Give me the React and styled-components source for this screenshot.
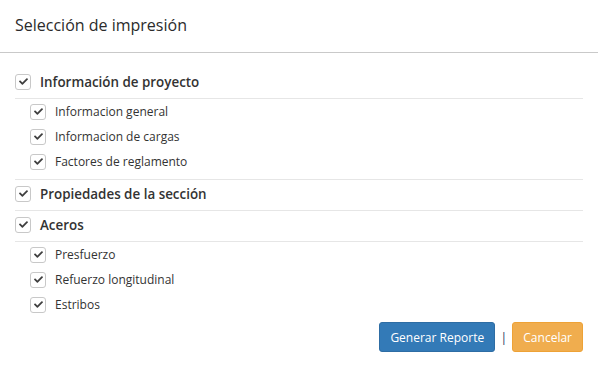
import React from "react";
import styled, { createGlobalStyle } from "styled-components";

const Global = createGlobalStyle`
  html, body { margin: 0; padding: 0; background: #fff; }
  body { font-family: "Open Sans", "Liberation Sans", sans-serif; color: #333; }
  * { box-sizing: border-box; }
`;

const Modal = styled.div`
  width: 598px;
  height: 372px;
  background: #fff;
  display: flex;
  flex-direction: column;
`;

const Header = styled.div`
  height: 53px;
  display: flex;
  align-items: center;
  padding: 0 15px 2px;
  border-bottom: 1px solid #c9c9c9;
`;

const Title = styled.h4`
  margin: 0;
  font-size: 16px;
  font-weight: 400;
  color: #2b2b2b;
`;

const Body = styled.div`
  padding: 15px 15px 0;
`;

const Section = styled.div`
  border-bottom: 1px solid #e6e6e6;
  &:last-child { border-bottom: none; }
`;

const TopRow = styled.label`
  display: flex;
  align-items: center;
  gap: 9px;
  height: ${(p) => (p.$withChildren ? "31px" : "30px")};
  padding-bottom: 3px;
  border-bottom: ${(p) => (p.$withChildren ? "1px solid #e6e6e6" : "none")};
  font-size: 13.4px;
  font-weight: 600;
  color: #333;
`;

const SubList = styled.div`
  padding: 0 0 5px 15px;
`;

const SubRow = styled.label`
  display: flex;
  align-items: center;
  gap: 9px;
  height: 25px;
  font-size: 12px;
  font-weight: 400;
  color: #333;
`;

const Box = styled.span`
  width: 16px;
  height: 16px;
  flex: none;
  border: 1px solid #c8c8c8;
  border-radius: 3px;
  background: #fff;
  display: flex;
  align-items: center;
  justify-content: center;
  svg { width: 9px; height: 9px; fill: #3f3f3f; }
`;

const Footer = styled.div`
  display: flex;
  justify-content: flex-end;
  align-items: center;
  gap: 5px;
  padding: 0 15px;
`;

const Button = styled.button`
  height: 30px;
  padding: 0 10px;
  border: 1px solid ${(p) => (p.$variant === "primary" ? "#2e6da4" : "#eea236")};
  background: ${(p) => (p.$variant === "primary" ? "#337ab7" : "#f0ad4e")};
  color: #fff;
  border-radius: 3px;
  font-family: "Open Sans", "Liberation Sans", sans-serif;
  font-size: 12px;
  cursor: pointer;
`;

const Divider = styled.span`
  font-size: 13px;
  color: #33415f;
`;

const Check = () => (
  <Box>
    <svg viewBox="0 0 512 512">
      <path d="M173.898 439.404l-166.4-166.4c-9.997-9.997-9.997-26.206 0-36.204l36.203-36.204c9.997-9.998 26.207-9.998 36.204 0L192 312.69 432.095 72.596c9.997-9.997 26.207-9.997 36.204 0l36.203 36.204c9.997 9.997 9.997 26.206 0 36.204l-294.4 294.401c-9.998 9.997-26.207 9.997-36.204-.001z" />
    </svg>
  </Box>
);

const sections = [
  {
    label: "Información de proyecto",
    items: ["Informacion general", "Informacion de cargas", "Factores de reglamento"],
  },
  { label: "Propiedades de la sección", items: [] },
  { label: "Aceros", items: ["Presfuerzo", "Refuerzo longitudinal", "Estribos"] },
];

export default function App() {
  return (
    <>
      <Global />
      <Modal>
        <Header>
          <Title>Selección de impresión</Title>
        </Header>
        <Body>
          {sections.map((s) => (
            <Section key={s.label}>
              <TopRow $withChildren={s.items.length > 0}>
                <Check />
                {s.label}
              </TopRow>
              {s.items.length > 0 && (
                <SubList>
                  {s.items.map((it) => (
                    <SubRow key={it}>
                      <Check />
                      {it}
                    </SubRow>
                  ))}
                </SubList>
              )}
            </Section>
          ))}
        </Body>
        <Footer>
          <Button $variant="primary">Generar Reporte</Button>
          <Divider>|</Divider>
          <Button $variant="warning">Cancelar</Button>
        </Footer>
      </Modal>
    </>
  );
}
